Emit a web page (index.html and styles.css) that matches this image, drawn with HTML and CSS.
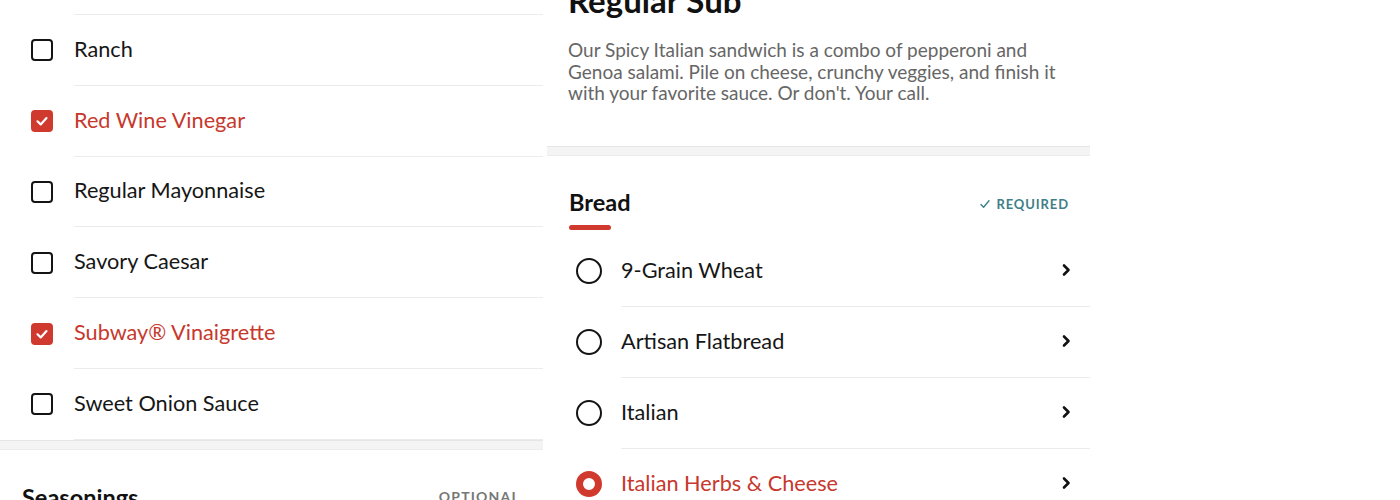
FILE: index.html
```html
<!DOCTYPE html>
<html>
<head>
<meta charset="utf-8">
<link rel="stylesheet" href="styles.css">
</head>
<body>
<div class="screens">
  <section class="panel left">
    <ul class="list checks">
      <li class="row"><span class="box"></span><span class="label">Peppercorn Ranch</span></li>
      <li class="row"><span class="box"></span><span class="label">Ranch</span></li>
      <li class="row on"><span class="box"><svg viewBox="0 0 22 22"><path d="M6.5 11.3l3.2 3.1 5.8-6.3" fill="none" stroke="#fff" stroke-width="2.2" stroke-linecap="round" stroke-linejoin="round"/></svg></span><span class="label">Red Wine Vinegar</span></li>
      <li class="row"><span class="box"></span><span class="label">Regular Mayonnaise</span></li>
      <li class="row"><span class="box"></span><span class="label">Savory Caesar</span></li>
      <li class="row on"><span class="box"><svg viewBox="0 0 22 22"><path d="M6.5 11.3l3.2 3.1 5.8-6.3" fill="none" stroke="#fff" stroke-width="2.2" stroke-linecap="round" stroke-linejoin="round"/></svg></span><span class="label">Subway® Vinaigrette</span></li>
      <li class="row"><span class="box"></span><span class="label">Sweet Onion Sauce</span></li>
    </ul>
    <div class="divider"></div>
    <div class="sec-head">
      <h2 class="sec-title">Seasonings</h2>
      <span class="optional">OPTIONAL</span>
    </div>
  </section>

  <section class="panel right">
    <h1 class="title">Regular Sub</h1>
    <p class="desc">Our Spicy Italian sandwich is a combo of pepperoni and Genoa salami. Pile on cheese, crunchy veggies, and finish it with your favorite sauce. Or don't. Your call.</p>
    <div class="divider"></div>
    <div class="sec-head bread">
      <div class="sec-title-wrap">
        <h2 class="sec-title">Bread</h2>
        <span class="bar"></span>
      </div>
      <span class="required"><svg viewBox="0 0 12 12"><path d="M2 6.5l2.6 2.8L10 2.8" fill="none" stroke="#3f8088" stroke-width="1.4" stroke-linecap="round" stroke-linejoin="round"/></svg>REQUIRED</span>
    </div>
    <ul class="list radios">
      <li class="row"><span class="radio"></span><span class="label">9-Grain Wheat<svg class="chev" viewBox="0 0 10 14"><path d="M3 2.5l4.5 4.5L3 11.5" fill="none" stroke="#111" stroke-width="2.6" stroke-linecap="round" stroke-linejoin="round"/></svg></span></li>
      <li class="row"><span class="radio"></span><span class="label">Artisan Flatbread<svg class="chev" viewBox="0 0 10 14"><path d="M3 2.5l4.5 4.5L3 11.5" fill="none" stroke="#111" stroke-width="2.6" stroke-linecap="round" stroke-linejoin="round"/></svg></span></li>
      <li class="row"><span class="radio"></span><span class="label">Italian<svg class="chev" viewBox="0 0 10 14"><path d="M3 2.5l4.5 4.5L3 11.5" fill="none" stroke="#111" stroke-width="2.6" stroke-linecap="round" stroke-linejoin="round"/></svg></span></li>
      <li class="row on"><span class="radio"></span><span class="label">Italian Herbs &amp; Cheese<svg class="chev" viewBox="0 0 10 14"><path d="M3 2.5l4.5 4.5L3 11.5" fill="none" stroke="#111" stroke-width="2.6" stroke-linecap="round" stroke-linejoin="round"/></svg></span></li>
    </ul>
  </section>
</div>
</body>
</html>
```

FILE: styles.css
```css
* { box-sizing: border-box; }
html, body { margin: 0; padding: 0; background: #fff; }
body {
  font-family: Lato, "Open Sans", sans-serif;
  color: #161616;
  height: 500px;
  overflow: hidden;
}
.screens {
  display: flex;
  gap: 4px;
  align-items: flex-start;
}
.panel {
  width: 543px;
  flex: none;
  overflow: hidden;
  height: 500px;
}
.list { list-style: none; margin: 0; padding: 0; }
.checks { margin-top: -56px; }
.row {
  display: flex;
  align-items: stretch;
  height: 71px;
}
.checks .row { height: 70.85px; padding-left: 31px; }
.box {
  width: 22px; height: 22px;
  border: 2px solid #141414;
  border-radius: 4px;
  align-self: center;
  flex: none;
  margin-right: 21px;
  display: flex;
}
.box svg { width: 22px; height: 22px; margin: -2px; }
.row.on .box { background: #d0392e; border-color: #d0392e; }
.label {
  flex: 1;
  display: flex;
  align-items: center;
  border-bottom: 1px solid #ececec;
  font-size: 21.7px;
  padding-bottom: 2px;
}
.row.on .label { color: #c7382d; }
.divider {
  height: 10px;
  background: #f4f4f4;
  border-top: 1px solid #e6e6e6;
  border-bottom: 1px solid #ececec;
}
.sec-head {
  display: flex;
  justify-content: space-between;
  align-items: center;
  padding: 0 21px 0 22px;
}
.left .sec-head { padding-top: 33px; }
.sec-title { margin: 0; font-size: 23.5px; font-weight: 700; color: #111; }
.optional {
  font-size: 14px; letter-spacing: 1.2px; color: #777; font-weight: 700;
  margin-right: 2px;
}
.title {
  margin: -19px 0 0 21px;
  font-size: 33px;
  line-height: 38px;
  font-weight: 700;
  color: #111;
}
.desc {
  margin: 20px 0 0 21px;
  width: 492px;
  font-size: 19px;
  line-height: 21.5px;
  color: #666;
  height: 107px;
}
.bread { padding-top: 33px; align-items: flex-start; }
.sec-title-wrap { display: flex; flex-direction: column; }
.bread .sec-title { line-height: 27px; }
.bar {
  width: 42px; height: 5px; border-radius: 3px; background: #d0392e;
  margin-top: 9px;
}
.required {
  display: flex; align-items: center; gap: 5px;
  font-size: 13px; font-weight: 700; letter-spacing: 0.9px;
  color: #3f8088;
  margin-top: 7px;
}
.required svg { width: 12px; height: 12px; }
.radios { margin-top: 6px; }
.radios .row { padding-left: 29px; }
.radio {
  width: 26px; height: 26px;
  border: 2.5px solid #141414;
  border-radius: 50%;
  align-self: center;
  flex: none;
  margin-right: 19px;
  margin-bottom: 1px;
}
.row.on .radio {
  border: 7px solid #d0392e;
  background: #fff;
}
.radios .label { justify-content: space-between; padding-right: 19px; }
.chev { width: 10px; height: 14px; }
```
